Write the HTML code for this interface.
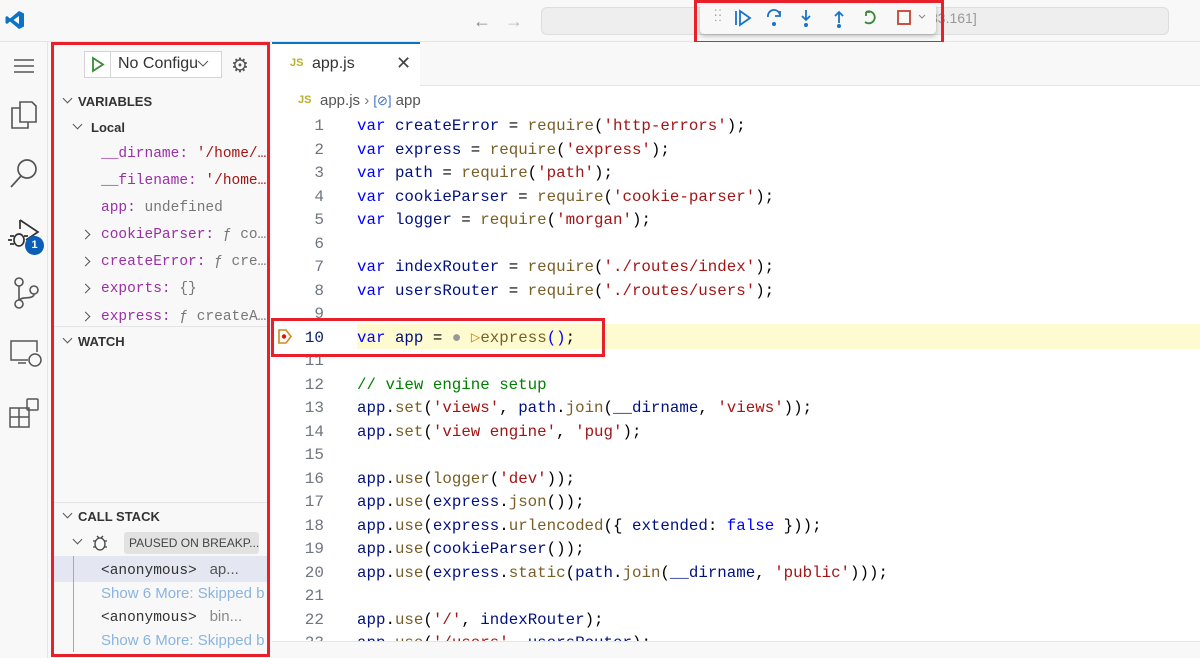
<!DOCTYPE html>
<html><head><meta charset="utf-8">
<style>
*{margin:0;padding:0;box-sizing:border-box}
body{width:1200px;height:658px;overflow:hidden;background:#fff;font-family:"Liberation Sans",sans-serif;position:relative}
.abs{position:absolute}
.title{left:0;top:0;width:1200px;height:42px;background:#f8f8f8;border-bottom:1px solid #e5e5e5}
.act{left:0;top:42px;width:48px;height:616px;background:#f8f8f8;border-right:1px solid #e5e5e5}
.side{left:48px;top:42px;width:224px;height:616px;background:#f8f8f8}
.red{border:3px solid #e8202a}
.sv{font-family:"Liberation Mono",monospace;font-size:14.5px;color:#9b2fa6;position:absolute;white-space:nowrap}
.sv .g{color:#777}.sv .s{color:#a31515}
.hd{position:absolute;font-size:13px;font-weight:bold;color:#333;left:78px}
.chev{position:absolute;width:7px;height:7px;border-right:1.4px solid #555;border-bottom:1.4px solid #555}
.cr{position:absolute;width:7px;height:7px;border-right:1.4px solid #555;border-top:1.4px solid #555;transform:rotate(45deg)}
.code{position:absolute;left:0;font-family:"Liberation Mono",monospace;font-size:15.8px;white-space:pre;line-height:23.5px}
.ln{position:absolute;width:324px;text-align:right;color:#6e7681;font-family:"Liberation Mono",monospace;font-size:16px;line-height:23.5px}
.k{color:#0000ff}.v{color:#001080}.f{color:#795e26}.s{color:#a31515}.c{color:#008000}.p{color:#000}
</style></head><body>
<div class="abs title"></div>
<svg class="abs" style="left:5px;top:10px" width="20" height="20" viewBox="0 0 20 20"><path d="M14 1 L19 3.5 V16.5 L14 19 L5 11.5 L2 14 L0.5 13 V7 L2 6 L5 8.5 Z M14 6 L8.5 10 L14 14 Z" fill="#0a73c8" fill-rule="evenodd"/></svg>
<div class="abs" style="left:473px;top:11px;color:#888;font-size:18px">←</div>
<div class="abs" style="left:505px;top:11px;color:#bbb;font-size:18px">→</div>
<div class="abs" style="left:541px;top:7px;width:628px;height:28px;background:#eeeeee;border:1px solid #ddd;border-radius:6px"></div>
<div class="abs" style="left:930px;top:10px;font-size:14px;color:#999">33.161]</div>
<div class="abs" style="left:700px;top:4px;width:236px;height:30px;background:#f8f8f8;border-radius:4px;box-shadow:0 2px 5px rgba(0,0,0,.25)"></div>
<div class="abs" style="left:714px;top:10px;color:#999;font-size:12px;line-height:5px;letter-spacing:1px">::<br>::<br></div>
<svg class="abs" style="left:700px;top:4px" width="240" height="30" viewBox="0 0 240 30">
<g stroke="#1a73c8" stroke-width="1.8" fill="none">
<path d="M36 7V21"/><path d="M40 7L50 14L40 21Z"/>
<path d="M68 13 A6 6 0 0 1 80 11 M80 7V12H75"/>
<path d="M106 6V16 M102 12L106 16L110 12"/>
<path d="M139 19V8 M135 12L139 8L143 12"/>
</g>
<circle cx="74" cy="20" r="2" fill="#1a73c8"/><circle cx="106" cy="21" r="2" fill="#1a73c8"/><circle cx="139" cy="22" r="2" fill="#1a73c8"/>
<path d="M166 8A6 6 0 1 1 165 18 M166 8V12 M166 8H170" stroke="#388a34" stroke-width="1.8" fill="none"/>
<rect x="198" y="7" width="12" height="13" stroke="#c5422f" stroke-width="1.8" fill="none"/>
<path d="M219 11L222 14L225 11" stroke="#888" stroke-width="1" fill="none"/>
</svg>
<div class="abs red" style="left:694px;top:0;width:250px;height:44px"></div>

<div class="abs act"></div>
<svg class="abs" style="left:12px;top:56px" width="24" height="20"><path d="M2 4H22M2 10H22M2 16H22" stroke="#555" stroke-width="1.5"/></svg>
<svg class="abs" style="left:8px;top:98px" width="32" height="34" viewBox="0 0 32 34" fill="none" stroke="#555" stroke-width="1.6"><path d="M12 4H24L28 8V24H12Z"/><path d="M12 10H4V30H20V24"/></svg>
<svg class="abs" style="left:8px;top:156px" width="32" height="34" fill="none" stroke="#555" stroke-width="1.7"><circle cx="19" cy="13" r="9"/><path d="M13 20L3 31"/></svg>
<svg class="abs" style="left:6px;top:216px" width="36" height="36" fill="none" stroke="#333" stroke-width="1.7"><path d="M14 4L32 16L20 24"/><path d="M14 4V13"/><ellipse cx="13" cy="24" rx="5" ry="6"/><path d="M4 20H8M4 28H8M6 24H2M18 20H22"/></svg>
<div class="abs" style="left:25px;top:236px;width:19px;height:19px;border-radius:50%;background:#0a5eb8;color:#fff;font-size:11px;font-weight:bold;text-align:center;line-height:19px">1</div>
<svg class="abs" style="left:8px;top:276px" width="32" height="34" fill="none" stroke="#555" stroke-width="1.6"><circle cx="11" cy="6" r="4"/><circle cx="11" cy="28" r="4"/><circle cx="26" cy="14" r="4"/><path d="M11 10V24M26 18C26 24 13 20 12 24"/></svg>
<svg class="abs" style="left:8px;top:338px" width="34" height="32" fill="none" stroke="#555" stroke-width="1.5"><path d="M20 22H3V3H29V14"/><path d="M10 25H18"/><circle cx="27" cy="22" r="6"/></svg>
<svg class="abs" style="left:8px;top:398px" width="34" height="32" fill="none" stroke="#555" stroke-width="1.5"><path d="M2 10H11V29H2ZM2 19H21V29H11M11 10H21V19"/><rect x="19" y="1" width="11" height="11" rx="1"/></svg>

<div class="abs side"></div>
<div class="abs" style="left:84px;top:51px;width:138px;height:27px;border:1px solid #d4d4d4;background:#fff"></div>
<div class="abs" style="left:110px;top:51px;width:1px;height:27px;background:#d4d4d4"></div>
<svg class="abs" style="left:91px;top:56px" width="14" height="17"><path d="M2 2L12 8.5L2 15Z" stroke="#388a34" stroke-width="1.8" fill="none"/></svg>
<div class="abs" style="left:118px;top:55px;font-size:16px;color:#333;width:80px;overflow:hidden;white-space:nowrap">No Configu</div>
<svg class="abs" style="left:197px;top:60px" width="12" height="8"><path d="M1 1L6 6L11 1" stroke="#555" fill="none"/></svg>
<div class="abs" style="left:231px;top:53px;font-size:20px;color:#555">⚙</div>

<div class="chev" style="left:64px;top:95px;transform:rotate(45deg)"></div>
<div class="hd" style="top:94px">VARIABLES</div>
<div class="chev" style="left:74px;top:121px;transform:rotate(45deg)"></div>
<div class="hd" style="top:120px;left:91px">Local</div>
<div class="sv" style="left:101px;top:146px">__dirname: <span class="s">'/home/…</span></div>
<div class="sv" style="left:101px;top:173px">__filename: <span class="s">'/home…</span></div>
<div class="sv" style="left:101px;top:200px">app: <span class="g">undefined</span></div>
<div class="cr" style="left:82px;top:231px"></div><div class="sv" style="left:101px;top:227px">cookieParser: <span class="g">ƒ co…</span></div>
<div class="cr" style="left:82px;top:258px"></div><div class="sv" style="left:101px;top:254px">createError: <span class="g">ƒ cre…</span></div>
<div class="cr" style="left:82px;top:285px"></div><div class="sv" style="left:101px;top:281px">exports: <span class="g">{}</span></div>
<div class="cr" style="left:82px;top:313px"></div><div class="sv" style="left:101px;top:309px">express: <span class="g">ƒ createA…</span></div>
<div class="abs" style="left:52px;top:326px;width:216px;height:1px;background:#e5e5e5"></div>
<div class="chev" style="left:64px;top:335px;transform:rotate(45deg)"></div>
<div class="hd" style="top:334px">WATCH</div>
<div class="abs" style="left:52px;top:502px;width:216px;height:1px;background:#e5e5e5"></div>
<div class="chev" style="left:64px;top:510px;transform:rotate(45deg)"></div>
<div class="hd" style="top:509px">CALL STACK</div>
<div class="chev" style="left:74px;top:536px;transform:rotate(45deg)"></div>
<svg class="abs" style="left:91px;top:533px" width="18" height="19" fill="none" stroke="#444" stroke-width="1.3"><ellipse cx="9" cy="11" rx="5" ry="6"/><path d="M2 8H5M13 8H16M2 14H5M13 14H16M6 3L8 5M12 3L10 5"/></svg>
<div class="abs" style="left:124px;top:532px;width:135px;height:22px;background:#e2e2e2;border-radius:3px;font-size:12px;color:#444;line-height:22px;padding-left:5px;white-space:nowrap">PAUSED ON BREAKP...</div>
<div class="abs" style="left:52px;top:556px;width:216px;height:26px;background:#e4e6f1"></div>
<div class="abs" style="left:73px;top:556px;width:1px;height:96px;background:#aaa"></div>
<div class="sv" style="left:101px;top:561px;color:#333">&lt;anonymous&gt; <span style="font-family:'Liberation Sans';color:#555;font-size:15px">&nbsp;ap...</span></div>
<div class="abs" style="left:101px;top:585px;font-size:15px;color:#8ab4e0;white-space:nowrap;width:167px;overflow:hidden">Show 6 More: Skipped b</div>
<div class="sv" style="left:101px;top:608px;color:#333">&lt;anonymous&gt; <span style="font-family:'Liberation Sans';color:#888;font-size:15px">&nbsp;bin...</span></div>
<div class="abs" style="left:101px;top:632px;font-size:15px;color:#8ab4e0;white-space:nowrap;width:167px;overflow:hidden">Show 6 More: Skipped b</div>
<div class="abs red" style="left:51px;top:42px;width:219px;height:615px"></div>

<div class="abs" style="left:272px;top:42px;width:928px;height:44px;background:#f8f8f8;border-bottom:1px solid #e5e5e5"></div>
<div class="abs" style="left:272px;top:42px;width:148px;height:45px;background:#fff;border-top:2px solid #0a73c8"></div>
<div class="abs" style="left:290px;top:57px;font-size:11px;font-weight:bold;color:#b8b02e">JS</div>
<div class="abs" style="left:312px;top:55px;font-size:16px;color:#333">app.js</div>
<div class="abs" style="left:396px;top:53px;font-size:18px;color:#444">✕</div>
<div class="abs" style="left:298px;top:94px;font-size:11px;font-weight:bold;color:#b8b02e">JS</div>
<div class="abs" style="left:320px;top:92px;font-size:15px;color:#555">app.js <span style="color:#777">›</span> <span style="color:#3a6fc4;font-size:13px">[⊘]</span> app</div>

<div class="abs" style="left:357px;top:324px;width:843px;height:25px;background:#fffbd0"></div>
<svg class="abs" style="left:277px;top:328px" width="16" height="17"><path d="M2 2H9L14 8.5L9 15H2Z" stroke="#d08a1a" stroke-width="1.6" fill="#fff"/><circle cx="7" cy="8.5" r="2.2" fill="#e51400"/></svg>

<div class="ln" style="top:115px;left:0">1<br>2<br>3<br>4<br>5<br>6<br>7<br>8<br>9<br><span style="color:#0b216f">10</span><br>11<br>12<br>13<br>14<br>15<br>16<br>17<br>18<br>19<br>20<br>21<br>22<br>23</div>
<div class="code" style="left:357px;top:115px"><span class="k">var</span> <span class="v">createError</span> = <span class="f">require</span>(<span class="s">'http-errors'</span>);
<span class="k">var</span> <span class="v">express</span> = <span class="f">require</span>(<span class="s">'express'</span>);
<span class="k">var</span> <span class="v">path</span> = <span class="f">require</span>(<span class="s">'path'</span>);
<span class="k">var</span> <span class="v">cookieParser</span> = <span class="f">require</span>(<span class="s">'cookie-parser'</span>);
<span class="k">var</span> <span class="v">logger</span> = <span class="f">require</span>(<span class="s">'morgan'</span>);

<span class="k">var</span> <span class="v">indexRouter</span> = <span class="f">require</span>(<span class="s">'./routes/index'</span>);
<span class="k">var</span> <span class="v">usersRouter</span> = <span class="f">require</span>(<span class="s">'./routes/users'</span>);

<span class="k">var</span> <span class="v">app</span> = <span style="color:#999">●</span> <span style="color:#d08a1a">▷</span><span class="f">express</span><span class="k">()</span>;

<span class="c">// view engine setup</span>
<span class="v">app</span>.<span class="f">set</span>(<span class="s">'views'</span>, <span class="v">path</span>.<span class="f">join</span>(<span class="v">__dirname</span>, <span class="s">'views'</span>));
<span class="v">app</span>.<span class="f">set</span>(<span class="s">'view engine'</span>, <span class="s">'pug'</span>);

<span class="v">app</span>.<span class="f">use</span>(<span class="f">logger</span>(<span class="s">'dev'</span>));
<span class="v">app</span>.<span class="f">use</span>(<span class="v">express</span>.<span class="f">json</span>());
<span class="v">app</span>.<span class="f">use</span>(<span class="v">express</span>.<span class="f">urlencoded</span>({ <span class="v">extended</span>: <span class="k">false</span> }));
<span class="v">app</span>.<span class="f">use</span>(<span class="v">cookieParser</span>());
<span class="v">app</span>.<span class="f">use</span>(<span class="v">express</span>.<span class="f">static</span>(<span class="v">path</span>.<span class="f">join</span>(<span class="v">__dirname</span>, <span class="s">'public'</span>)));

<span class="v">app</span>.<span class="f">use</span>(<span class="s">'/'</span>, <span class="v">indexRouter</span>);
<span class="v">app</span>.<span class="f">use</span>(<span class="s">'/users'</span>, <span class="v">usersRouter</span>);</div>
<div class="abs" style="left:272px;top:641px;width:928px;height:17px;background:#f8f8f8;border-top:1px solid #e5e5e5"></div>
<div class="abs red" style="left:271px;top:318px;width:334px;height:39px"></div>
</body></html>
